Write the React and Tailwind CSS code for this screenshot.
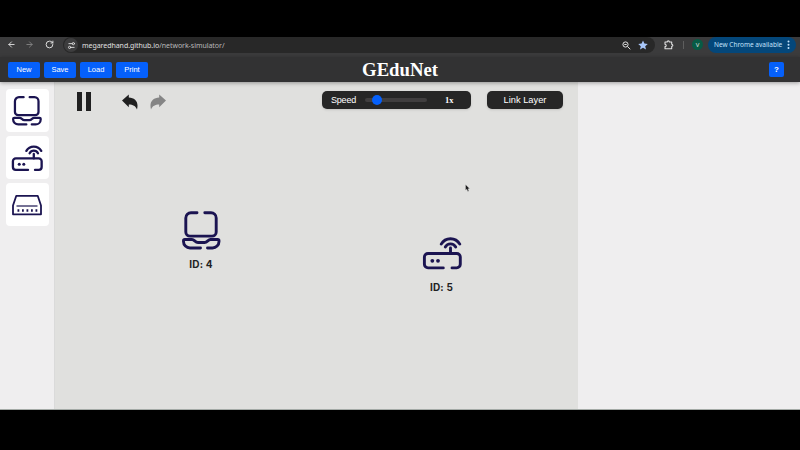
import React from "react";
import { ArrowLeft, ArrowRight, RotateCw, Settings2 } from "lucide-react";

const INK = "#1b1451";

function Laptop({ size }) {
  return (
    <svg width={size} height={size} viewBox="0 -0.5 40 40" fill="none" stroke={INK} strokeWidth="2.9" strokeLinecap="round" strokeLinejoin="round">
      <path d="M15 2.300H9a5.200 5.200 0 0 0-5.200 5.200V21.400a4.200 4.200 0 0 0 4.200 4.200H30a4.200 4.200 0 0 0 4.200-4.200V7.500A5.200 5.200 0 0 0 29 2.300H22.800" />
      <path d="M18.500 37.500H8A6.500 6.500 0 0 1 1.500 31V30.300Q1.500 29 2.800 29H10C12.500 29 13 32 16 32H22.500C25.500 32 26 29 28.500 29H35.700Q37 29 37 30.300V31A6.500 6.500 0 0 1 30.500 37.500H25.500" />
    </svg>
  );
}

function Router({ size }) {
  return (
    <svg width={size} height={size} viewBox="0 -3.500 40 40" fill="none" stroke={INK} strokeWidth="2.9" strokeLinecap="round" strokeLinejoin="round">
      <path d="M21.300 31.400H6A3.600 3.600 0 0 1 2.400 27.800V20.600A3.600 3.600 0 0 1 6 17H34.700A3.600 3.600 0 0 1 38.300 20.600V27.800A3.600 3.600 0 0 1 34.700 31.400H30" />
      <path d="M28.500 17V11.500M23.300 10.500A5.900 5.900 0 0 1 33.700 10.500M19.200 7.600A10.700 10.700 0 0 1 37.800 7.600" />
      <circle cx="10.300" cy="24.300" r="1.900" fill={INK} stroke="none" />
      <circle cx="16" cy="24.300" r="1.900" fill={INK} stroke="none" />
    </svg>
  );
}

function Switch() {
  return (
    <svg width="32" height="32" viewBox="0 0 32 32" fill="none" stroke={INK} strokeWidth="1.800" strokeLinejoin="round">
      <path d="M5.300 6.800H26.700L30 16.500V25.300H2V16.500Z" />
      <path d="M5.500 17H26.500" strokeWidth="1.200" />
      <path d="M6.500 21.500H27" strokeWidth="2.400" strokeDasharray="1.800 2.700" />
    </svg>
  );
}

function Tile({ children }) {
  return <div className="flex h-[43px] w-[43px] shrink-0 items-center justify-center rounded-[4px] bg-white">{children}</div>;
}

function Curve({ className }) {
  return (
    <svg className={className} width="16" height="16" viewBox="0 0 16 16" fill="currentColor">
      <path d="M0 6.500 6.800.5V3.600C13 3.800 17 8 15 15.500 13.500 12 11 10.600 6.800 10.600V13.200Z" />
    </svg>
  );
}

function BrowserBar() {
  return (
    <div className="flex h-5 shrink-0 items-start bg-[#3b3b3c] pl-[7px] pr-[4px] text-[#e0e0e0]">
      <ArrowLeft className="mt-[3px]" size={9} strokeWidth={2.4} />
      <ArrowRight className="ml-[9px] mt-[3px] text-[#858585]" size={9} strokeWidth={2.4} />
      <RotateCw className="ml-[11px] mt-[3px]" size={9} strokeWidth={2.6} />
      <div className="ml-[9px] flex h-[16px] w-[592px] items-center rounded-full bg-[#282828]">
        <div className="ml-[1px] flex h-[14px] w-[14px] items-center justify-center rounded-full bg-[#3d3d3e]">
          <Settings2 className="-scale-y-100" size={9} strokeWidth={2.4} />
        </div>
        <span className="ml-[4px] whitespace-nowrap font-['Noto_Sans',sans-serif] text-[7px] leading-none tracking-[-0.040px]">
          megaredhand.github.io<span className="text-[#b9b9b9]">/network-simulator/</span>
        </span>
        <svg className="ml-auto" width="9" height="9" viewBox="0 0 9 9" fill="none" stroke="currentColor" strokeWidth="1">
          <circle cx="3.500" cy="3.500" r="2.600" />
          <path d="M5.400 5.400 8.300 8.300M2.300 3.500H4.700" />
        </svg>
        <svg className="ml-[7px] mr-[7px]" width="10" height="10" viewBox="0 0 24 24" fill="#a9c7fa">
          <path d="m12 1 3.300 7.500 8.200.8-6.200 5.400 1.900 8.100-7.200-4.300-7.200 4.300 1.900-8.100L.5 9.300l8.200-.8z" />
        </svg>
      </div>
      <svg className="ml-[9px] mt-[3px] shrink-0" width="10" height="10" viewBox="0 0 10 10" fill="none" stroke="currentColor" strokeWidth="1.100" strokeLinejoin="round">
        <path d="M1 2H3.200A1.100 1.100 0 0 1 5.400 2H7.700V4.200A1.100 1.100 0 0 1 7.700 6.400V8.800H1V6.600A1.200 1.200 0 0 0 1 4.200Z" />
      </svg>
      <div className="ml-[9px] mt-[4px] h-[8px] w-px bg-[#5e5e5e]" />
      <div className="ml-[8px] mt-[2px] flex h-[11px] w-[11px] shrink-0 items-center justify-center rounded-full bg-[#075b45] font-['Noto_Sans',sans-serif] text-[6px] leading-none">V</div>
      <div className="ml-auto flex h-[16px] w-[88px] shrink-0 items-center rounded-full bg-[#04477a] pl-[6px] pr-[6px] text-[#c2e2fb]">
        <span className="whitespace-nowrap font-['Noto_Sans',sans-serif] text-[6.500px] leading-none">New Chrome available</span>
        <svg className="ml-auto shrink-0" width="3" height="10" viewBox="0 0 3 10" fill="currentColor">
          <circle cx="1.500" cy="1.500" r="1" /><circle cx="1.500" cy="4.800" r="1" /><circle cx="1.500" cy="8.100" r="1" />
        </svg>
      </div>
    </div>
  );
}

export default function App() {
  return (
    <div className="flex h-[450px] w-[800px] flex-col overflow-hidden bg-black pt-[37px] font-['Liberation_Sans',sans-serif]">
      <BrowserBar />
      <header className="z-10 grid h-[25px] shrink-0 grid-cols-[1fr_auto_1fr] items-center bg-[#323233] px-2 text-white shadow-[0_1px_4px_rgba(0,0,0,0.35)]">
        <div className="flex gap-1">
          {["New", "Save", "Load", "Print"].map((label) => (
            <button key={label} className="h-[16px] w-8 rounded-[2px] bg-[#0560fb] text-[7.500px] leading-none">{label}</button>
          ))}
        </div>
        <h1 className="pt-[2px] font-['Liberation_Serif',serif] text-[18.700px] font-bold leading-none">GEduNet</h1>
        <button className="mr-[8px] h-[15px] w-[15px] justify-self-end rounded-[2px] bg-[#0560fb] text-[8px] font-bold leading-none">?</button>
      </header>
      <main className="flex h-[328px] shrink-0 border-b border-[#a4aaa6] bg-[#efeeef]">
        <aside className="flex w-[54px] shrink-0 flex-col items-center gap-[4px] pt-[7px]">
          <Tile><Laptop size={31} /></Tile>
          <Tile><Router size={32} /></Tile>
          <Tile><Switch /></Tile>
        </aside>
        <section className="relative w-[524px] shrink-0 border-l border-[#dadada] bg-[#e0e0de]">
          <div className="flex h-9 items-center pl-[22px]">
            <div className="mt-[3px] flex gap-[4px]">
              <div className="h-[19px] w-[5px] bg-[#202020]" />
              <div className="h-[19px] w-[5px] bg-[#202020]" />
            </div>
            <Curve className="ml-[31px] mt-[3px] text-[#202020]" />
            <Curve className="ml-[12px] mt-[3px] -scale-x-100 text-[#858585]" />
            <div className="ml-[156px] flex h-[18px] w-[149px] items-center rounded-[5px] bg-[#262626] pl-[9px] text-white shadow-sm">
              <span className="w-[25px] text-[9px] leading-none tracking-[-0.200px]">Speed</span>
              <div className="ml-[9px] flex h-[4px] w-[62px] items-center rounded-full bg-[#403e3f] pl-[7px]">
                <div className="h-[10px] w-[10px] rounded-full bg-[#0560fb]" />
              </div>
              <span className="ml-[18px] font-['Liberation_Serif',serif] text-[8.500px] font-bold leading-none">1x</span>
            </div>
            <button className="ml-[16px] h-[18px] w-[76px] rounded-[5px] bg-[#262626] pt-px text-[9.300px] leading-none text-white shadow-sm">Link Layer</button>
          </div>
          <div className="absolute left-[127px] top-[128px] flex w-[40px] flex-col items-center">
            <Laptop size={40} />
            <span className="mr-[2px] mt-[9px] whitespace-nowrap font-['Inter',sans-serif] text-[10px] font-bold leading-none tracking-[0.200px] text-[#222]">ID: 4</span>
          </div>
          <div className="absolute left-[367px] top-[151px] flex w-[40px] flex-col items-center">
            <Router size={40} />
            <span className="mr-px mt-[9px] whitespace-nowrap font-['Inter',sans-serif] text-[10px] font-bold leading-none tracking-[0.200px] text-[#222]">ID: 5</span>
          </div>
          <svg className="absolute left-[410px] top-[102px]" width="6" height="8" viewBox="0 0 6 8">
            <path d="M.5.5V6.300L1.800 5.200 2.800 7.500 3.900 7 3 4.800H4.800Z" fill="#1c1c1c" stroke="#f5f5f5" strokeWidth=".3" />
          </svg>
        </section>
      </main>
    </div>
  );
}
